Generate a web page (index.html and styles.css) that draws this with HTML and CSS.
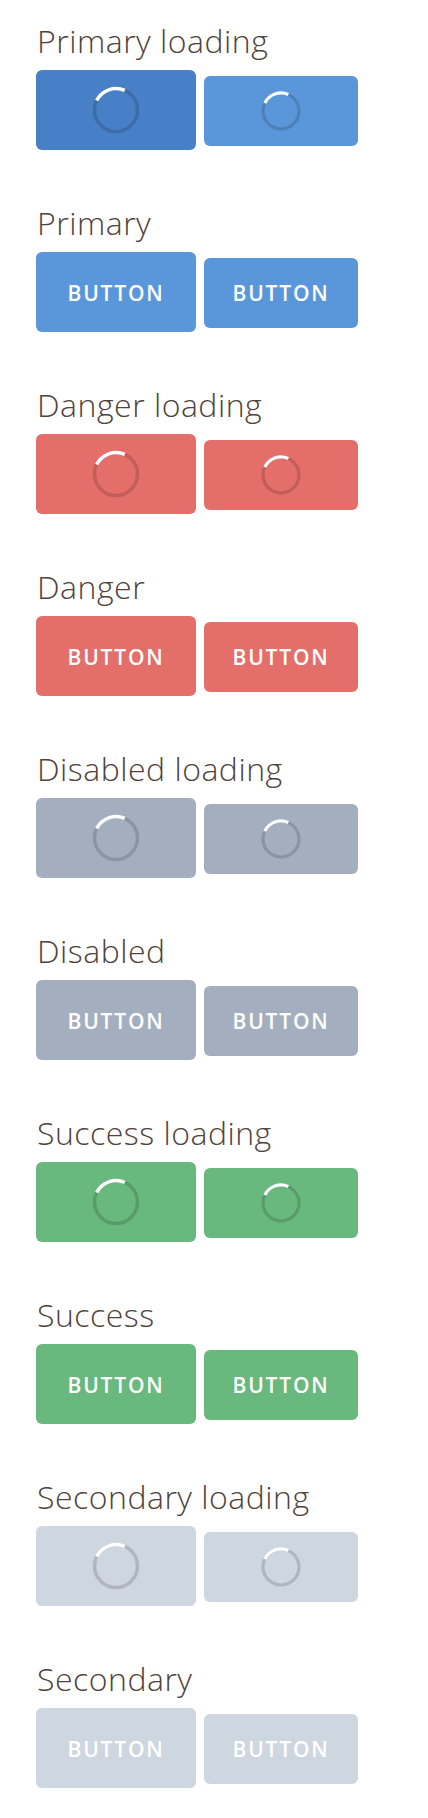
FILE: index.html
```html
<!DOCTYPE html>
<html lang="en">
<head>
<meta charset="utf-8">
<title>Buttons</title>
<link rel="stylesheet" href="styles.css">
</head>
<body>
<main class="page">
  <section class="group">
    <h2 class="label">Primary loading</h2>
    <div class="row">
      <button class="btn btn--lg btn--primary is-active"><svg class="spin spin--lg" viewBox="0 0 48 48"><circle class="spin__track" cx="24" cy="24" r="21.5"/><circle class="spin__arc" cx="24" cy="24" r="21.5" pathLength="360"/></svg></button>
      <button class="btn btn--sm btn--primary"><svg class="spin spin--sm" viewBox="0 0 40 40"><circle class="spin__track" cx="20" cy="20" r="18"/><circle class="spin__arc" cx="20" cy="20" r="18" pathLength="360"/></svg></button>
    </div>
  </section>
  <section class="group">
    <h2 class="label">Primary</h2>
    <div class="row">
      <button class="btn btn--lg btn--primary">BUTTON</button>
      <button class="btn btn--sm btn--primary">BUTTON</button>
    </div>
  </section>
  <section class="group">
    <h2 class="label">Danger loading</h2>
    <div class="row">
      <button class="btn btn--lg btn--danger"><svg class="spin spin--lg" viewBox="0 0 48 48"><circle class="spin__track" cx="24" cy="24" r="21.5"/><circle class="spin__arc" cx="24" cy="24" r="21.5" pathLength="360"/></svg></button>
      <button class="btn btn--sm btn--danger"><svg class="spin spin--sm" viewBox="0 0 40 40"><circle class="spin__track" cx="20" cy="20" r="18"/><circle class="spin__arc" cx="20" cy="20" r="18" pathLength="360"/></svg></button>
    </div>
  </section>
  <section class="group">
    <h2 class="label">Danger</h2>
    <div class="row">
      <button class="btn btn--lg btn--danger">BUTTON</button>
      <button class="btn btn--sm btn--danger">BUTTON</button>
    </div>
  </section>
  <section class="group">
    <h2 class="label">Disabled loading</h2>
    <div class="row">
      <button class="btn btn--lg btn--disabled"><svg class="spin spin--lg" viewBox="0 0 48 48"><circle class="spin__track" cx="24" cy="24" r="21.5"/><circle class="spin__arc" cx="24" cy="24" r="21.5" pathLength="360"/></svg></button>
      <button class="btn btn--sm btn--disabled"><svg class="spin spin--sm" viewBox="0 0 40 40"><circle class="spin__track" cx="20" cy="20" r="18"/><circle class="spin__arc" cx="20" cy="20" r="18" pathLength="360"/></svg></button>
    </div>
  </section>
  <section class="group">
    <h2 class="label">Disabled</h2>
    <div class="row">
      <button class="btn btn--lg btn--disabled">BUTTON</button>
      <button class="btn btn--sm btn--disabled">BUTTON</button>
    </div>
  </section>
  <section class="group">
    <h2 class="label">Success loading</h2>
    <div class="row">
      <button class="btn btn--lg btn--success"><svg class="spin spin--lg" viewBox="0 0 48 48"><circle class="spin__track" cx="24" cy="24" r="21.5"/><circle class="spin__arc" cx="24" cy="24" r="21.5" pathLength="360"/></svg></button>
      <button class="btn btn--sm btn--success"><svg class="spin spin--sm" viewBox="0 0 40 40"><circle class="spin__track" cx="20" cy="20" r="18"/><circle class="spin__arc" cx="20" cy="20" r="18" pathLength="360"/></svg></button>
    </div>
  </section>
  <section class="group">
    <h2 class="label">Success</h2>
    <div class="row">
      <button class="btn btn--lg btn--success">BUTTON</button>
      <button class="btn btn--sm btn--success">BUTTON</button>
    </div>
  </section>
  <section class="group">
    <h2 class="label">Secondary loading</h2>
    <div class="row">
      <button class="btn btn--lg btn--secondary"><svg class="spin spin--lg" viewBox="0 0 48 48"><circle class="spin__track" cx="24" cy="24" r="21.5"/><circle class="spin__arc" cx="24" cy="24" r="21.5" pathLength="360"/></svg></button>
      <button class="btn btn--sm btn--secondary"><svg class="spin spin--sm" viewBox="0 0 40 40"><circle class="spin__track" cx="20" cy="20" r="18"/><circle class="spin__arc" cx="20" cy="20" r="18" pathLength="360"/></svg></button>
    </div>
  </section>
  <section class="group">
    <h2 class="label">Secondary</h2>
    <div class="row">
      <button class="btn btn--lg btn--secondary">BUTTON</button>
      <button class="btn btn--sm btn--secondary">BUTTON</button>
    </div>
  </section>
</main>
</body>
</html>
```

FILE: styles.css
```css
* { box-sizing: border-box; }

html, body {
  margin: 0;
  padding: 0;
  background: #ffffff;
}

.page {
  padding: 21px 0 30px 36px;
  font-family: "Open Sans", "Noto Sans", sans-serif;
}

.group {
  margin-bottom: 53px;
}

.label {
  margin: 0 0 9px 1px;
  font-size: 32px;
  line-height: 40px;
  font-weight: 300;
  letter-spacing: 0.5px;
  color: #4f433c;
}

.row {
  display: flex;
  align-items: center;
  gap: 8px;
  height: 80px;
}

.btn {
  display: flex;
  align-items: center;
  justify-content: center;
  border: 0;
  border-radius: 6px;
  padding: 0;
  padding-top: 2px;
  color: #ffffff;
  font-family: "Open Sans", "Noto Sans", sans-serif;
  font-size: 21px;
  font-weight: 600;
  letter-spacing: 1.8px;
}

.btn--lg {
  width: 160px;
  height: 80px;
}

.btn--sm {
  width: 154px;
  height: 70px;
  margin-top: 1px;
  padding-top: 0;
}

.btn--primary { background: #5a97da; }
.btn--primary.is-active { background: #4780c6; }
.btn--danger { background: #e46e6a; }
.btn--disabled { background: #a3afbf; }
.btn--success { background: #69b87e; }
.btn--secondary { background: #ced6e0; }

.spin { display: block; margin-top: -2px; }
.btn--sm .spin { margin-top: 0; }
.spin--lg { width: 48px; height: 48px; }
.spin--sm { width: 40px; height: 40px; }

.spin__track {
  fill: none;
  stroke: rgba(0, 0, 0, 0.15);
}

.spin__arc {
  fill: none;
  stroke: #ffffff;
  stroke-dasharray: 88 272;
  transform: rotate(206deg);
  transform-origin: center;
  transform-box: fill-box;
}

.spin--lg .spin__track, .spin--lg .spin__arc { stroke-width: 3.5; }
.spin--sm .spin__track, .spin--sm .spin__arc { stroke-width: 3.2; }
```
